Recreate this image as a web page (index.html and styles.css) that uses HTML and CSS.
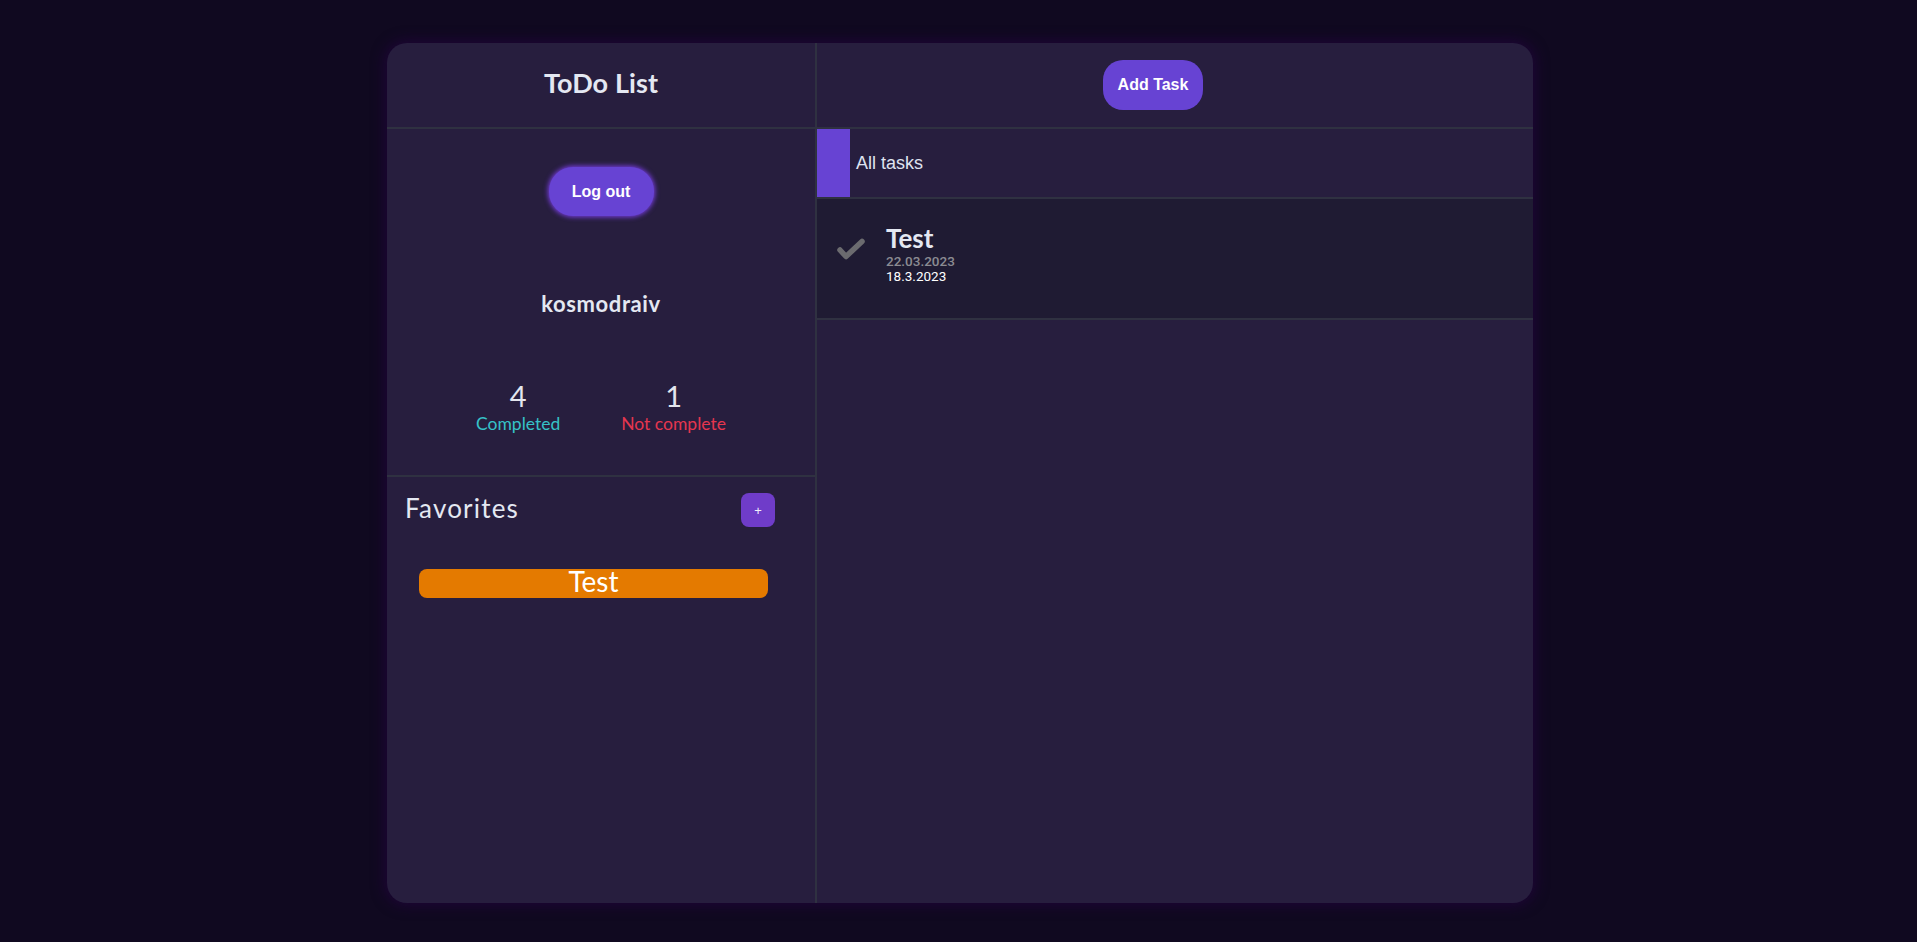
FILE: index.html
```html
<!DOCTYPE html>
<html lang="en">
<head>
<meta charset="utf-8">
<title>ToDo List</title>
<link rel="stylesheet" href="styles.css">
</head>
<body>
<div class="app">
  <aside class="sidebar">
    <header class="side-header"><h1 class="title">ToDo List</h1></header>
    <section class="profile">
      <button class="btn logout">Log out</button>
      <div class="username">kosmodraiv</div>
      <div class="stats">
        <div class="stat">
          <div class="stat-num">4</div>
          <div class="stat-label done">Completed</div>
        </div>
        <div class="stat">
          <div class="stat-num">1</div>
          <div class="stat-label todo">Not complete</div>
        </div>
      </div>
    </section>
    <section class="favorites">
      <div class="fav-head">
        <h2 class="fav-title">Favorites</h2>
        <button class="fav-add">+</button>
      </div>
      <div class="fav-item">Test</div>
    </section>
  </aside>
  <main class="content">
    <header class="main-header"><button class="btn add">Add Task</button></header>
    <div class="filter-row">
      <span class="filter-mark"></span>
      <span class="filter-label">All tasks</span>
    </div>
    <div class="task">
      <svg class="check" width="30" height="24" viewBox="0 0 30 24"><polyline points="4,13 10,19.5 26,4.5" fill="none" stroke="#6b6b6f" stroke-width="5.5" stroke-linecap="round" stroke-linejoin="round"/></svg>
      <div class="task-body">
        <div class="task-title">Test</div>
        <div class="task-date due">22.03.2023</div>
        <div class="task-date created">18.3.2023</div>
      </div>
    </div>
  </main>
</div>
</body>
</html>
```
FILE: styles.css
```css
* { box-sizing: border-box; }
html, body { margin: 0; padding: 0; }
body {
  background: #100920;
  width: 1917px;
  height: 942px;
  overflow: hidden;
  font-family: "Lato", "Liberation Sans", sans-serif;
  color: #e2e4ee;
}
.app {
  width: 1146px;
  height: 860px;
  margin: 43px 0 0 387px;
  background: #271e3e;
  border-radius: 20px;
  box-shadow: 0 0 14px 2px #1f0538;
  display: flex;
  overflow: hidden;
}
.sidebar {
  width: 430px;
  border-right: 2px solid #2f3141;
  display: flex;
  flex-direction: column;
}
.side-header {
  height: 86px;
  border-bottom: 2px solid #2f3141;
  display: flex;
  align-items: center;
  justify-content: center;
  padding-bottom: 6px;
}
.title {
  margin: 0;
  font-size: 27px;
  font-weight: 700;
  color: #e4e8f2;
  letter-spacing: 0.1px;
}
.btn {
  border: none;
  background: #6743d3;
  color: #ffffff;
  font-family: "Liberation Sans", Arial, sans-serif;
  font-weight: 700;
  font-size: 16px;
  cursor: pointer;
}
.profile {
  height: 348px;
  border-bottom: 2px solid #2f3141;
  display: flex;
  flex-direction: column;
  align-items: center;
  padding-top: 38px;
}
.logout {
  width: 105px;
  height: 49px;
  border-radius: 24px;
  box-shadow: 0 0 5px 1px #7a3ee6;
}
.username {
  margin-top: 75px;
  font-size: 22px;
  font-weight: 700;
  letter-spacing: 0.6px;
  line-height: 26px;
  color: #e4e8f2;
}
.stats {
  margin-top: 62px;
  display: flex;
  gap: 61px;
}
.stat {
  display: flex;
  flex-direction: column;
  align-items: center;
}
.stat-num {
  font-size: 29px;
  line-height: 34px;
  color: #e4e6ee;
}
.stat-label {
  font-size: 17.5px;
  line-height: 21px;
}
.stat-label.done { color: #36c2c8; }
.stat-label.todo { color: #e5364f; }
.favorites {
  flex: 1;
  display: flex;
  flex-direction: column;
}
.fav-head {
  display: flex;
  justify-content: space-between;
  align-items: flex-start;
  padding: 16px 40px 0 18px;
}
.fav-title {
  margin: 0;
  font-size: 26px;
  font-weight: 400;
  line-height: 31px;
  letter-spacing: 1.2px;
  color: #e4e8f2;
}
.fav-add {
  width: 34px;
  height: 34px;
  border: none;
  border-radius: 8px;
  background: #6f3cc9;
  color: #f0eefc;
  font-family: "Liberation Sans", Arial, sans-serif;
  font-size: 13px;
  padding: 0;
}
.fav-item {
  margin: 42px 47px 0 32px;
  height: 29px;
  background: #e47a00;
  border-radius: 8px;
  color: #ffffff;
  text-align: center;
  font-size: 28px;
  line-height: 25px;
  padding-bottom: 4px;
}
.content {
  flex: 1;
  display: flex;
  flex-direction: column;
}
.main-header {
  height: 86px;
  border-bottom: 2px solid #2f3141;
  display: flex;
  align-items: center;
  justify-content: center;
  padding-right: 44px;
}
.add {
  width: 100px;
  height: 50px;
  border-radius: 20px;
}
.filter-row {
  height: 70px;
  border-bottom: 2px solid #2f3141;
  display: flex;
  align-items: center;
  gap: 6px;
}
.filter-mark {
  width: 33px;
  align-self: stretch;
  background: #6743d3;
}
.filter-label {
  font-family: "Liberation Sans", Arial, sans-serif;
  font-size: 18px;
  color: #dfe3f0;
}
.task {
  height: 121px;
  background: #1f1b33;
  border-bottom: 2px solid #2f3141;
  display: flex;
  align-items: flex-start;
  padding: 25px 0 0 19px;
}
.check {
  margin-top: 13px;
  flex: none;
}
.task-body {
  margin-left: 20px;
  display: flex;
  flex-direction: column;
}
.task-title {
  font-size: 26px;
  font-weight: 700;
  line-height: 28px;
  color: #e4e8f2;
  margin-bottom: 2px;
}
.task-date {
  font-family: "Roboto", "Liberation Sans", sans-serif;
  font-size: 13.5px;
  line-height: 15px;
  font-weight: 400;
}
.task-date.due { color: #8b8b92; font-weight: 500; }
.task-date.created { color: #ffffff; }
```
